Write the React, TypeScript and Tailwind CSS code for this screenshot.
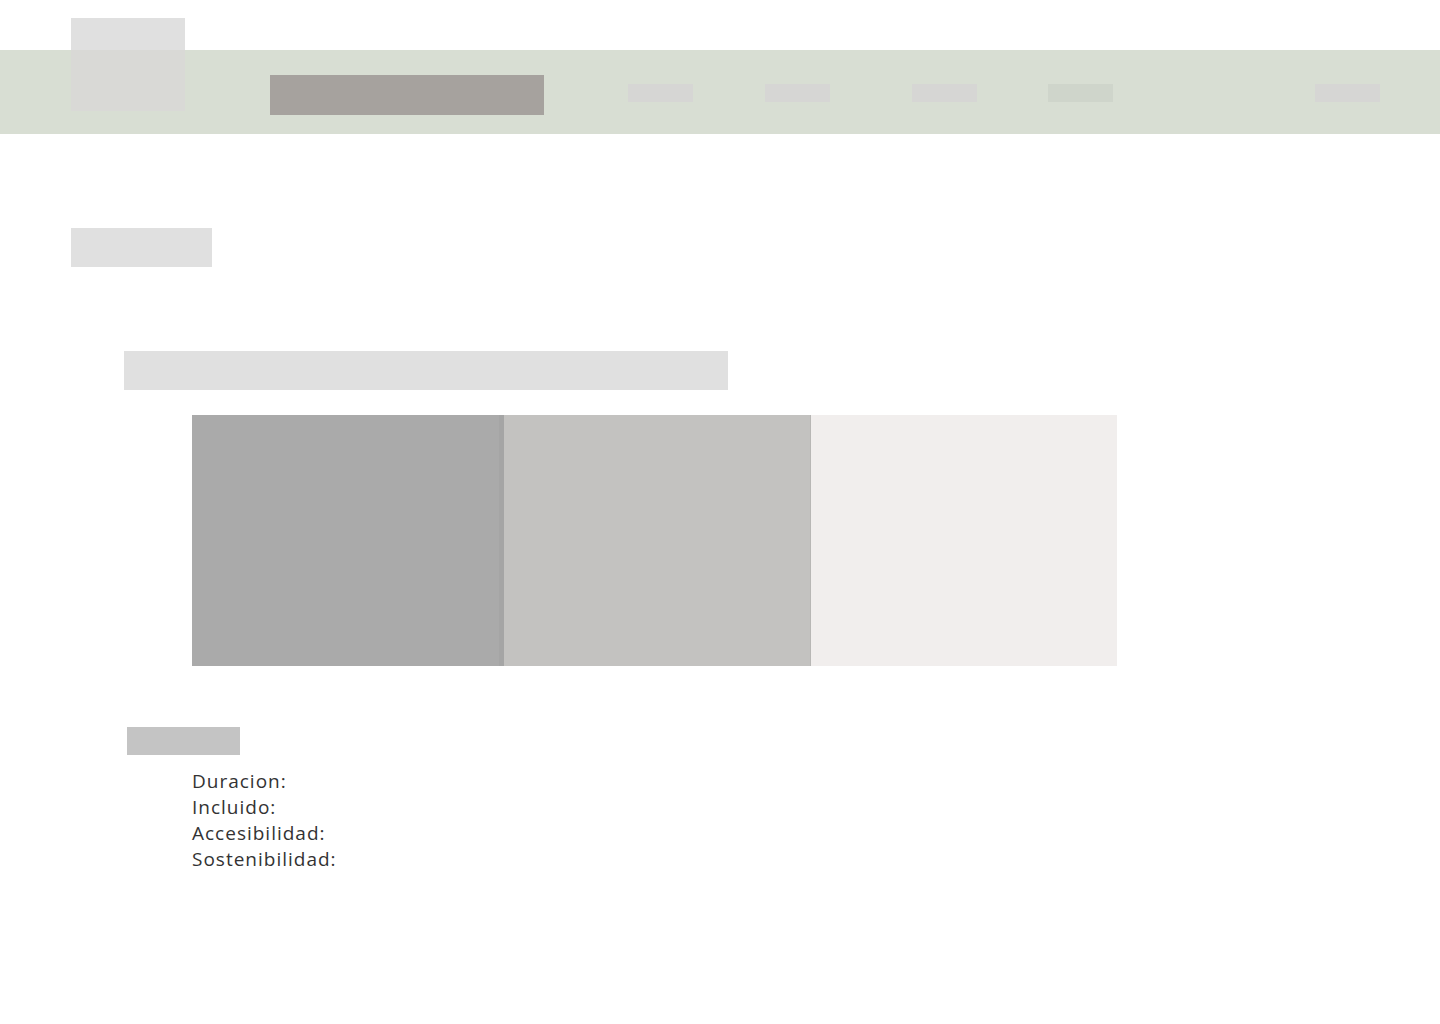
const navItems = [
    { ml: 'ml-[84px]', color: 'bg-[#d6d6d4]' },
    { ml: 'ml-[72px]', color: 'bg-[#d6d6d4]' },
    { ml: 'ml-[82px]', color: 'bg-[#d6d6d4]' },
    { ml: 'ml-[71px]', color: 'bg-[#cfd5cb]' },
    { ml: 'ml-[202px]', color: 'bg-[#d6d6d4]' },
];

const details = ['Duracion:', 'Incluido:', 'Accesibilidad:', 'Sostenibilidad:'];

export default function App() {
    return (
        <main className="w-full min-h-screen bg-white font-['Open_Sans','Liberation_Sans',sans-serif]">
            {/* Header */}
            <header className="relative pt-[50px]">
                {/* Logo placeholder overlapping the band */}
                <div className="absolute left-[71px] top-[18px] z-10 w-[114px] h-[93px] flex flex-col">
                    <div className="h-[32px] bg-[#e0e0e0]" />
                    <div className="flex-1 bg-[#d9d9d6]" />
                </div>
                <div className="h-[84px] bg-[#d8ded3] flex items-start">
                    <div className="ml-[270px] mt-[25px] w-[274px] h-[40px] bg-[#a6a29e]" />
                    {navItems.map((item, i) => (
                        <div key={i} className={`${item.ml} mt-[34px] w-[65px] h-[18px] ${item.color}`} />
                    ))}
                </div>
            </header>

            {/* Title */}
            <section className="pt-[94px] pl-[71px]">
                <div className="w-[141px] h-[39px] bg-[#e0e0e0]" />
            </section>

            {/* Subtitle + gallery */}
            <section className="pt-[84px]">
                <div className="ml-[124px] w-[604px] h-[39px] bg-[#e0e0e0]" />
                <div className="ml-[192px] mt-[25px] flex h-[251px]">
                    <div className="w-[307px] bg-[#aaaaaa]" />
                    <div className="w-[5px] bg-[#a5a5a5]" />
                    <div className="w-[306px] bg-[#c3c2c0]" />
                    <div className="w-[1px] bg-[#b8b7b5]" />
                    <div className="w-[306px] bg-[#f1eeed]" />
                </div>
            </section>

            {/* Details */}
            <section className="pt-[61px]">
                <div className="ml-[127px] w-[113px] h-[28px] bg-[#c4c4c4]" />
                <ul className="ml-[192px] mt-[13px] text-[19px] leading-[26px] tracking-[1px] text-[#333333]">
                    {details.map((d) => (
                        <li key={d}>{d}</li>
                    ))}
                </ul>
            </section>
        </main>
    );
}
